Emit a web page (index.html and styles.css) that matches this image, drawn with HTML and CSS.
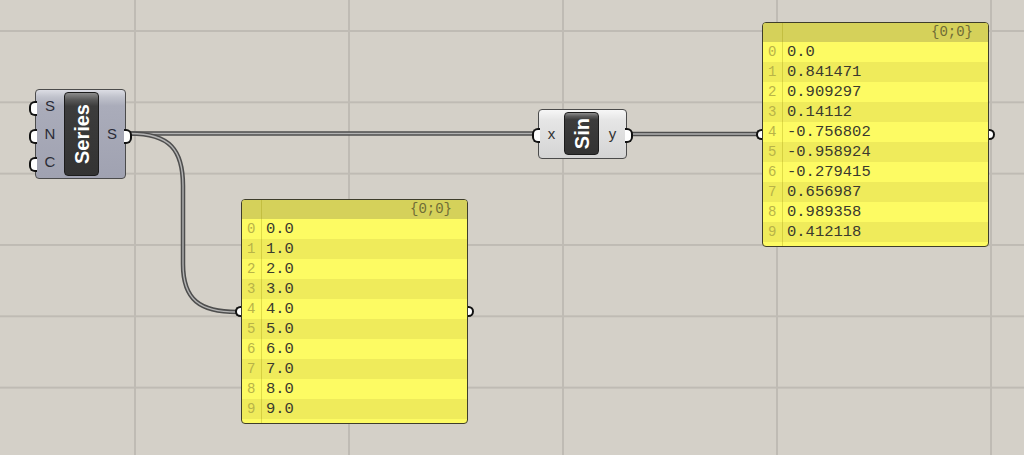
FILE: index.html
```html
<!DOCTYPE html>
<html lang="en">
<head>
  <meta charset="UTF-8" />
  <title>Series to Sin</title>
  <link rel="stylesheet" href="styles.css">
</head>
<body>
  <div class="canvas">
    <svg class="wires" width="1024" height="455" viewBox="0 0 1024 455">
      <!-- Series S -> Sin x -->
      <path class="wire-outer" d="M130 133.5 L534 133.5" />
      <path class="wire-inner" d="M130 133.5 L534 133.5" />
      <!-- Sin y -> panel -->
      <path class="wire-outer" d="M631 134 L757 134" />
      <path class="wire-inner" d="M631 134 L757 134" />
      <!-- Series S -> panel -->
      <path class="wire-outer" d="M130 133.5 C170 133.5 183 150 183 186 L183 264 C183 300 200 312 237 312" />
      <path class="wire-inner" d="M130 133.5 C170 133.5 183 150 183 186 L183 264 C183 300 200 312 237 312" />
    </svg>

    <div class="node series">
      <div class="params inputs">
        <div class="param in">S</div>
        <div class="param in">N</div>
        <div class="param in">C</div>
      </div>
      <div class="label"><span>Series</span></div>
      <div class="params outputs">
        <div class="param out">S</div>
      </div>
    </div>

    <div class="node sin">
      <div class="params inputs">
        <div class="param in">x</div>
      </div>
      <div class="label"><span>Sin</span></div>
      <div class="params outputs">
        <div class="param out">y</div>
      </div>
    </div>

    <div class="panel panel-series">
      <span class="port port-in"></span>
      <span class="port port-out"></span>
      <div class="panel-head">{0;0}</div>
      <div class="rows">
        <div class="row"><span class="idx">0</span><span class="val">0.0</span></div>
        <div class="row"><span class="idx">1</span><span class="val">1.0</span></div>
        <div class="row"><span class="idx">2</span><span class="val">2.0</span></div>
        <div class="row"><span class="idx">3</span><span class="val">3.0</span></div>
        <div class="row"><span class="idx">4</span><span class="val">4.0</span></div>
        <div class="row"><span class="idx">5</span><span class="val">5.0</span></div>
        <div class="row"><span class="idx">6</span><span class="val">6.0</span></div>
        <div class="row"><span class="idx">7</span><span class="val">7.0</span></div>
        <div class="row"><span class="idx">8</span><span class="val">8.0</span></div>
        <div class="row"><span class="idx">9</span><span class="val">9.0</span></div>
      </div>
    </div>

    <div class="panel panel-sin">
      <span class="port port-in"></span>
      <span class="port port-out"></span>
      <div class="panel-head">{0;0}</div>
      <div class="rows">
        <div class="row"><span class="idx">0</span><span class="val">0.0</span></div>
        <div class="row"><span class="idx">1</span><span class="val">0.841471</span></div>
        <div class="row"><span class="idx">2</span><span class="val">0.909297</span></div>
        <div class="row"><span class="idx">3</span><span class="val">0.14112</span></div>
        <div class="row"><span class="idx">4</span><span class="val">-0.756802</span></div>
        <div class="row"><span class="idx">5</span><span class="val">-0.958924</span></div>
        <div class="row"><span class="idx">6</span><span class="val">-0.279415</span></div>
        <div class="row"><span class="idx">7</span><span class="val">0.656987</span></div>
        <div class="row"><span class="idx">8</span><span class="val">0.989358</span></div>
        <div class="row"><span class="idx">9</span><span class="val">0.412118</span></div>
      </div>
    </div>
  </div>
</body>
</html>
```
FILE: styles.css
```css
* { box-sizing: border-box; }
body {
  margin: 0;
  background: #d4d0c8;
  font-family: "Liberation Sans", Arial, sans-serif;
}
.canvas {
  position: relative;
  width: 1024px; height: 455px; overflow: hidden;
  background-color: #d4d0c8;
  background-image:
    linear-gradient(to right, #bfbbb4 2px, transparent 2px),
    linear-gradient(to bottom, #bfbbb4 2px, transparent 2px);
  background-size: 214px 100%, 100% 71.33px;
  background-position: 134px 0, 0 30px;
}

/* wires */
.wires { position: absolute; left: 0; top: 0; }
.wire-outer { fill: none; stroke: #4e4e4e; stroke-width: 4.5; }
.wire-inner { fill: none; stroke: #b3b3b3; stroke-width: 1.4; }

/* components */
.node {
  position: absolute;
  display: flex;
  border: 1px solid #4b4b4b;
  border-radius: 4px;
}
.series {
  left: 35px; top: 89px; width: 91px; height: 90px;
  padding: 2px 0;
  background: linear-gradient(#dcdde4 0, #c0c2cc 8%, #aaacba 18%, #a0a2b1 100%);
}
.sin {
  left: 538px; top: 109px; width: 89px; height: 50px;
  padding: 2px 0 3px;
  background: linear-gradient(#f7f7f7 0, #e6e6e6 20%, #d4d4d4 100%);
}
.params {
  display: flex; flex-direction: column; justify-content: space-around;
}
.series .inputs { width: 28px; }
.series .outputs { width: 26px; }
.sin .inputs { width: 25px; }
.sin .outputs { width: 27px; }
.param {
  position: relative;
  text-align: center;
  font-size: 15px; line-height: 16px;
  color: #2b2c36;
}
.sin .param { color: #333; }
.param::before,
.port {
  content: "";
  position: absolute; top: 50%;
  width: 6px; height: 11px;
  margin-top: -5.5px;
  background: #fff;
  border: 2px solid #111;
}
.param.in::before { left: -7px; border-right: none; border-radius: 6px 0 0 6px; }
.param.out::before { right: -7px; border-left: none; border-radius: 0 6px 6px 0; }

.label {
  width: 35px;
  display: flex; align-items: center; justify-content: center;
  background: linear-gradient(#8c8c8c 0, #5a5a5a 8%, #3c3c3c 16%, #333 100%);
  border: 1px solid #1c1c1c;
  border-radius: 4px;
}
.label span {
  writing-mode: vertical-rl;
  transform: rotate(180deg);
  color: #fff; font-weight: bold; font-size: 20px; line-height: 1;
}

/* panels */
.panel {
  position: absolute;
  width: 227px; height: 225px;
  border: 1px solid #3e3d2b;
  border-radius: 4px;
  background: #fdfb63;
  font-family: "Liberation Mono", "DejaVu Sans Mono", monospace;
}
.panel::after {
  content: "";
  position: absolute; left: 19px; top: 0; bottom: 0;
  width: 1px;
  background: rgba(150, 140, 0, 0.28);
}
.panel-series { left: 241px; top: 199px; }
.panel-sin { left: 762px; top: 22px; }
.panel-head {
  height: 19px;
  padding-right: 15px;
  background: #d5d15a;
  border-radius: 3px 3px 0 0;
  text-align: right;
  font-size: 14px; line-height: 19px;
  color: #6f6c36;
}
.row { display: flex; height: 20px; line-height: 20px; }
.row:nth-child(even) { background: #efeb5b; }
.idx { width: 20px; padding-left: 5px; font-size: 14px; color: #b8b348; }
.val { padding-left: 4px; font-size: 15.5px; color: #3a392e; }
.port-in { left: -7px; border-right: none; border-radius: 6px 0 0 6px; }
.port-out { right: -7px; border-left: none; border-radius: 0 6px 6px 0; }
```
